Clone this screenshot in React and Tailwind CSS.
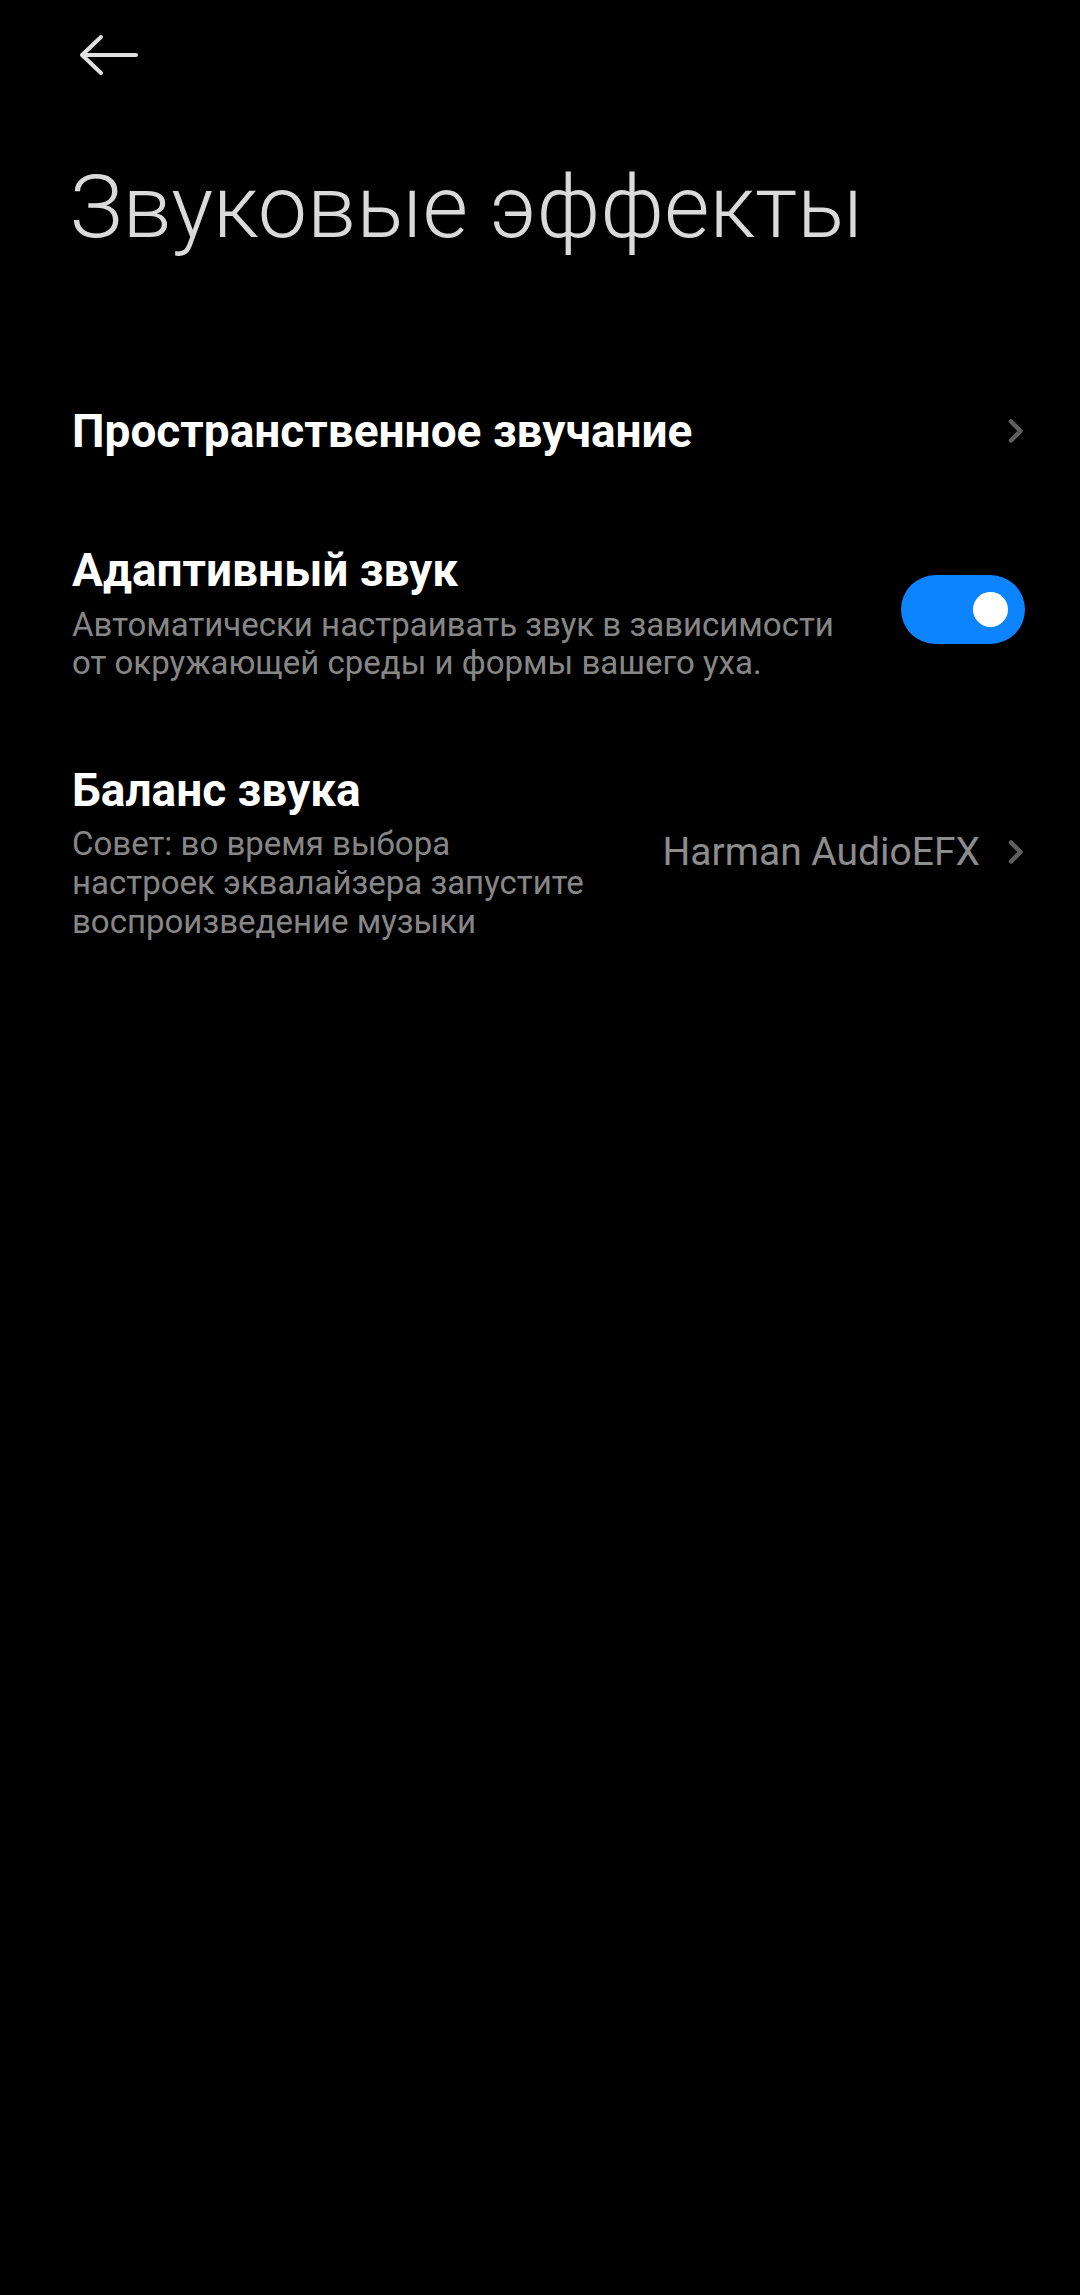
import { useState } from "react";

const Chevron = () => (
  <svg width="18" height="26" viewBox="0 0 18 26" fill="none" className="shrink-0">
    <path
      d="M4 3.5 L13.5 13 L4 22.5"
      stroke="#5e5e5e"
      strokeWidth="4.5"
      strokeLinecap="round"
      strokeLinejoin="round"
    />
  </svg>
);

const BackArrow = () => (
  <svg width="60" height="44" viewBox="0 0 60 44" fill="none">
    <path
      d="M22 4 L3 22 L22 40 M3 22 L57 22"
      stroke="#e0e0e0"
      strokeWidth="4"
      strokeLinecap="round"
      strokeLinejoin="round"
    />
  </svg>
);

const App = () => {
  const [adaptive, setAdaptive] = useState(true);

  return (
    <div
      className="min-h-[2295px] w-full bg-black text-white"
      style={{ fontFamily: "Roboto, 'Noto Sans', sans-serif" }}
    >
      {/* Header */}
      <div className="flex h-[110px] items-center pl-[79px]">
        <BackArrow />
      </div>

      {/* Title */}
      <h1 className="mt-[44px] pl-[70px] text-[88px] font-light leading-[106px] text-[#dadada]">
        Звуковые эффекты
      </h1>

      {/* Spatial sound */}
      <div className="mt-[144px] flex items-center justify-between pl-[72px] pr-[55px]">
        <p className="text-[46px] font-bold leading-[54px] text-white">
          Пространственное звучание
        </p>
        <Chevron />
      </div>

      {/* Adaptive sound */}
      <div className="mt-[85px] flex items-center justify-between pl-[72px] pr-[55px]">
        <div className="flex flex-col">
          <p className="text-[46px] font-bold leading-[54px] text-white">Адаптивный звук</p>
          <p className="mt-[9px] whitespace-nowrap text-[33px] leading-[38px] text-[#868686]">
            Автоматически настраивать звук в зависимости
            <br />
            от окружающей среды и формы вашего уха.
          </p>
        </div>
        <button
          onClick={() => setAdaptive(!adaptive)}
          className={`relative mb-[7px] h-[69px] w-[124px] shrink-0 rounded-full ${
            adaptive ? "bg-[#0d84ff]" : "bg-[#3a3a3a]"
          }`}
        >
          <span
            className={`absolute top-[17px] h-[35px] w-[35px] rounded-full bg-white ${
              adaptive ? "right-[17px]" : "left-[17px]"
            }`}
          />
        </button>
      </div>

      {/* Sound balance */}
      <div className="mt-[81px] flex items-center justify-between pl-[72px] pr-[55px]">
        <div className="flex flex-col">
          <p className="text-[46px] font-bold leading-[54px] text-white">Баланс звука</p>
          <p className="mt-[7px] whitespace-nowrap text-[33px] leading-[39px] text-[#868686]">
            Совет: во время выбора
            <br />
            настроек эквалайзера запустите
            <br />
            воспроизведение музыки
          </p>
        </div>
        <div className="flex items-center gap-[27px]">
          <span className="text-[39px] leading-[46px] text-[#8c8c8c]">Harman AudioEFX</span>
          <Chevron />
        </div>
      </div>
    </div>
  );
};

export default App;
